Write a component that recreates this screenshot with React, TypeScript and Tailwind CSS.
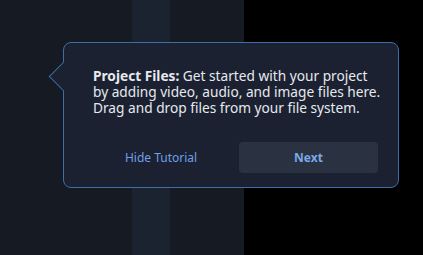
import React from 'react';

function Tooltip() {
    return (
        <div className="absolute left-[63px] top-[42px] w-[336px] h-[146px] rounded-[8px] border border-[#3d6ea8] bg-[#1b2130]">
            {/* arrow pointing to the panel on the left */}
            <div className="absolute -left-[11px] top-[23px] w-[21px] h-[21px] rotate-45 bg-[#1b2130] border-l border-b border-[#3d6ea8]" />

            <div className="relative flex flex-col h-full pl-[29px] pr-[10px] pt-[25px]">
                <p className="text-[13.7px] leading-[16px] text-[#e6e9ee] whitespace-nowrap">
                    <span className="font-bold">Project Files:</span> Get started with your project
                    <br />
                    by adding video, audio, and image files here.
                    <br />
                    Drag and drop files from your file system.
                </p>

                <div className="flex items-center mt-[26px] gap-[10px]">
                    <button className="w-[136px] text-[12px] text-[#6fa0e6]">Hide Tutorial</button>
                    <button className="w-[139px] h-[31px] rounded-[4px] bg-[#2a3241] text-[12px] font-bold text-[#7aa8ea]">
                        Next
                    </button>
                </div>
            </div>
        </div>
    );
}

export default function App() {
    return (
        <div className="relative w-[423px] h-[255px] overflow-hidden flex font-['Noto_Sans',sans-serif]">
            <div className="w-[132px] bg-[#161a23]" />
            <div className="w-[38px] bg-[#1b2230]" />
            <div className="w-[74px] bg-[#161a23]" />
            <div className="flex-1 bg-black" />
            <Tooltip />
        </div>
    );
}
